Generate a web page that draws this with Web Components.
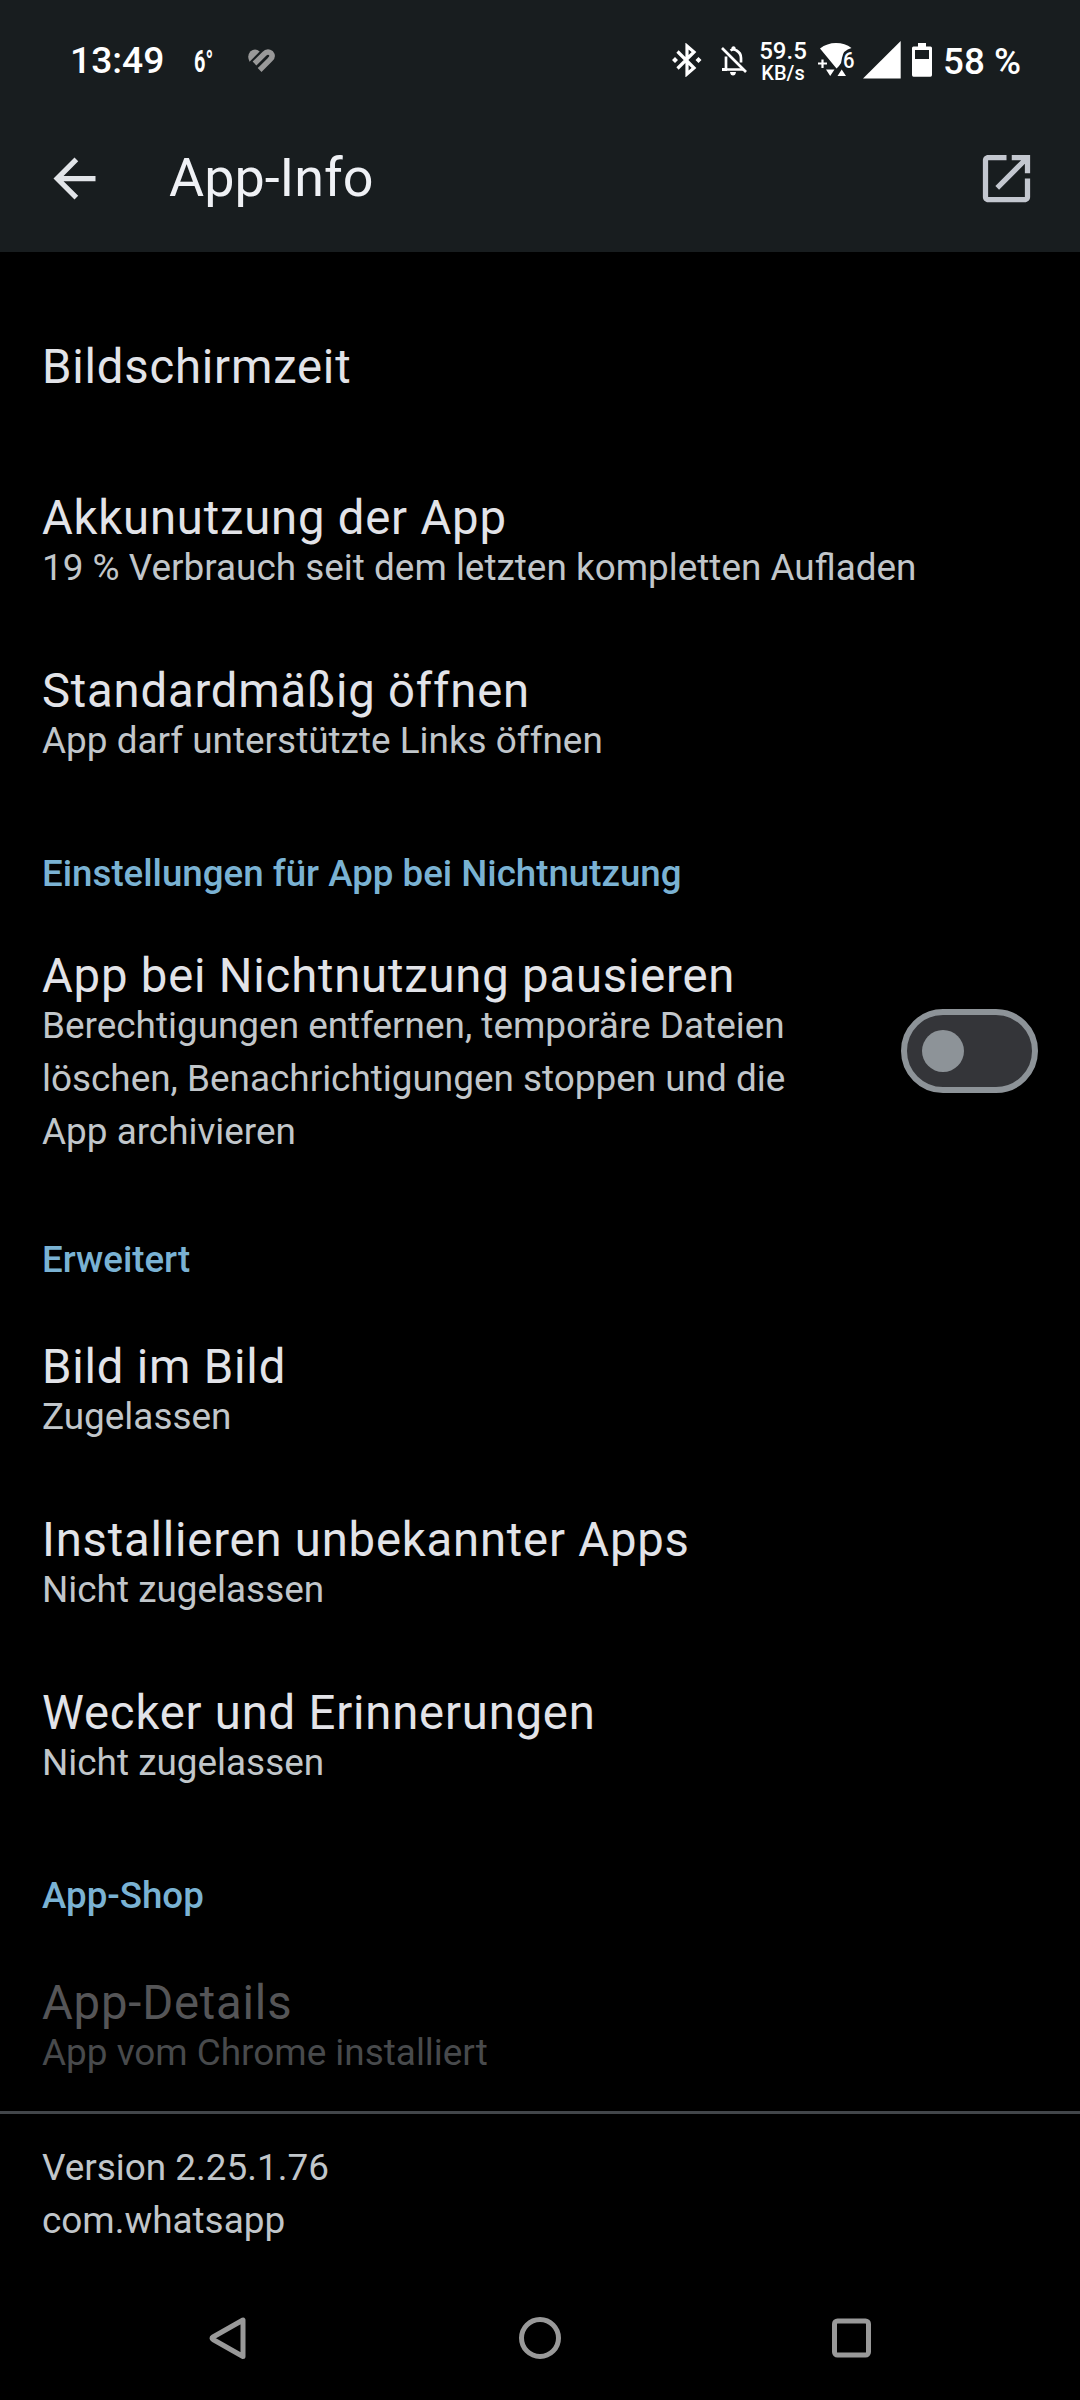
<!DOCTYPE html>
<html lang="de">
<head>
<meta charset="utf-8">
<title>App-Info</title>
<style>
html, body{
    margin: 0;
    background: #000;
}

body{
    width: 1080px;
    height: 2400px;
    overflow: hidden;
    font-family: Roboto, "Noto Sans", sans-serif;
}
</style>
</head>
<body>
<app-screen>
    <status-bar slot="top" data-time="13:49" data-temp="6°" data-speed="59.5" data-unit="KB/s" data-battery="58 %"></status-bar>
    <app-toolbar slot="top">App-Info</app-toolbar>

    <pref-item single>Bildschirmzeit</pref-item>
    <pref-item>Akkunutzung der App<span slot="summary">19 % Verbrauch seit dem letzten kompletten Aufladen</span></pref-item>
    <pref-item>Standardmäßig öffnen<span slot="summary">App darf unterstützte Links öffnen</span></pref-item>

    <pref-category>Einstellungen für App bei Nichtnutzung</pref-category>
    <pref-item compact>App bei Nichtnutzung pausieren<span slot="summary">Berechtigungen entfernen, temporäre Dateien löschen, Benachrichtigungen stoppen und die App archivieren</span><toggle-switch slot="widget"></toggle-switch></pref-item>

    <pref-category>Erweitert</pref-category>
    <pref-item>Bild im Bild<span slot="summary">Zugelassen</span></pref-item>
    <pref-item>Installieren unbekannter Apps<span slot="summary">Nicht zugelassen</span></pref-item>
    <pref-item>Wecker und Erinnerungen<span slot="summary">Nicht zugelassen</span></pref-item>

    <pref-category>App-Shop</pref-category>
    <pref-item disabled last>App-Details<span slot="summary">App vom Chrome installiert</span></pref-item>

    <version-footer>Version 2.25.1.76<br>com.whatsapp</version-footer>
    <nav-bar slot="bottom"></nav-bar>
</app-screen>

<script>
// attach an open shadow root with the given markup
function setup(el, html){
    el.attachShadow({mode: "open"});
    const template = document.createElement("template");
    template.innerHTML = html;
    el.shadowRoot.appendChild(template.content.cloneNode(true));
}

class AppScreen extends HTMLElement{
    constructor(){
        super();
        setup(this, `
<style>
:host{
    display: flex;
    flex-direction: column;
    height: 2400px;
    background: #000;
}

header{
    background: #181d1f;
    height: 252px;
}

main{
    flex: 1;
    padding-top: 23px;
}
</style>
<header><slot name="top"></slot></header>
<main><slot></slot></main>
<slot name="bottom"></slot>
`);
    }
}
customElements.define('app-screen', AppScreen);

class StatusBar extends HTMLElement{
    constructor(){
        super();
        setup(this, `
<style>
:host{
    display: flex;
    align-items: flex-start;
    height: 104px;
    padding: 0 59px 0 70px;
    box-sizing: border-box;
    color: #fff;
    font-weight: 500;
    white-space: nowrap;
}

svg{
    display: block;
    flex: none;
}

#time, #battery{
    font-size: 36.75px;
    line-height: 44px;
}

#time{
    width: 94px;
    margin-top: 38px;
    font-size: 37.2px;
}

#temp{
    width: 20px;
    margin: 42px 0 0 30px;
    font-size: 32px;
    line-height: 38px;
    font-weight: 700;
    transform: scaleX(.62);
    transform-origin: left;
}

#heart{
    margin: 49px 0 0 34px;
}

#icons{
    display: flex;
    margin-left: auto;
}

#net{
    width: 50px;
    text-align: center;
    margin: 40px 0 0 11px;
}

#speed{
    font-size: 24px;
    line-height: 23px;
}

#unit{
    font-size: 20px;
    line-height: 20px;
}

#battery{
    width: 78px;
    margin: 40px 0 0 11px;
}
</style>
<span id="time"></span>
<span id="temp"></span>
<svg id="heart" width="27" height="24" viewBox="0 0 27 24">
    <path d="M6.500 14.500L16 5.200Q19.500 1.400 23 4.200Q25.500 7.200 22.300 10.300L11.600 21" fill="none" stroke="#999" stroke-width="5.400"/>
    <path d="M9.800 17.600L19.400 8.200" stroke="#181d1f" stroke-width="1.500"/>
    <path d="M1.600 12.700Q-1.500 7 2.300 2.600Q7-1.600 11.700 2.500Z" fill="#999"/>
</svg>
<div id="icons">
    <svg width="30" height="34" viewBox="0 0 30 34" style="margin-top:43px">
        <path d="M5.500 8.500L22 25L15 31V3L22 9L5.500 25.500" fill="none" stroke="#fff" stroke-width="3.200"/>
        <path d="M3 14L6 17L3 20L0 17ZM26.500 14L29.500 17L26.500 20L23.500 17Z" fill="#fff"/>
    </svg>
    <svg width="26" height="30" viewBox="0 0 26 30" style="margin:46px 0 0 19px">
        <path d="M9.500 4.500Q12.500 2.500 15.500 4.500Q20 7 20 12V16.500M5 10.500V23.500H22" fill="none" stroke="#fff" stroke-width="2.700"/>
        <path d="M10.500 3V1.500Q12.500-1 14.500 1.500V4H10.500ZM1 22H6V25H1ZM9 26H15Q14.500 29.500 12 29.500Q9.500 29.500 9 26Z" fill="#fff"/>
        <path d="M1 2L25 26" stroke="#fff" stroke-width="2.600"/>
    </svg>
    <div id="net"><div id="speed"></div><div id="unit"></div></div>
    <svg width="38" height="34" viewBox="0 0 38 34" style="margin:43px 0 0 10px">
        <path d="M2 5.500Q9 0 18 0Q27 0 33.500 5Q25 7 24 15Q23.800 20 21 23L18.500 25.500Z" fill="#fff"/>
        <path d="M0 20.500H9M4.500 16.500V25" stroke="#fff" stroke-width="2.200"/>
        <path d="M8 26.500H16.500L12.200 33ZM19.500 33H28L23.700 26.500Z" fill="#fff"/>
        <text x="25" y="25" font-size="22" font-weight="500" fill="#fff" textLength="11.500" lengthAdjust="spacingAndGlyphs">6</text>
    </svg>
    <svg width="38" height="38" viewBox="0 0 38 38" style="margin:41px 0 0 7px">
        <path d="M0 37.500L37.700 0V37.500Z" fill="#fff"/>
    </svg>
    <svg width="20" height="34" viewBox="0 0 20 34" style="margin:43px 0 0 11px">
        <path fill-rule="evenodd" d="M6 0H14V3.500H18.500Q20 3.500 20 5V32Q20 33.700 18.500 33.700H1.500Q0 33.700 0 32V5Q0 3.500 1.500 3.500H6ZM3 7V16H17V7Z" fill="#fff"/>
    </svg>
    <span id="battery"></span>
</div>
`);
    }

    connectedCallback(){
        for(const name of ["time", "temp", "speed", "unit", "battery"]){
            this.shadowRoot.querySelector("#" + name).textContent = this.getAttribute("data-" + name);
        }
    }
}
customElements.define('status-bar', StatusBar);

class AppToolbar extends HTMLElement{
    constructor(){
        super();
        setup(this, `
<style>
:host{
    display: flex;
    align-items: center;
    height: 148px;
    padding: 0 42px 0 43px;
    box-sizing: border-box;
    color: #eff1f5;
}

svg{
    flex: none;
}

h1{
    flex: 1;
    margin: 0 0 0 63px;
    font-size: 53.9px;
    font-weight: 400;
    line-height: 64px;
}
</style>
<svg width="63" height="63" viewBox="0 0 24 24"><path fill="#e1e4e8" d="M20 11H7.830l5.590-5.590L12 4l-8 8 8 8 1.410-1.410L7.830 13H20v-2z"/></svg>
<h1><slot></slot></h1>
<svg width="63" height="63" viewBox="0 0 24 24"><path fill="#c3c7cf" d="M19 19H5V5h7V3H5c-1.110 0-2 .9-2 2v14c0 1.100.89 2 2 2h14c1.100 0 2-.9 2-2v-7h-2v7zM14 3v2h3.590l-9.830 9.830 1.410 1.410L19 6.410V10h2V3h-7z"/></svg>
`);
    }
}
customElements.define('app-toolbar', AppToolbar);

class PrefItem extends HTMLElement{
    constructor(){
        super();
        setup(this, `
<style>
:host{
    display: flex;
    align-items: center;
    justify-content: space-between;
    padding: 37px 42px 37px;
}

:host([single]){
    padding: 69px 42px 67px;
}

:host([compact]){
    padding: 32px 42px 32px;
}

:host([last]){
    padding-bottom: 32px;
}

#title{
    color: #e2e3e8;
    font-size: 47.25px;
    line-height: 47px;
    letter-spacing: .8px;
    white-space: nowrap;
}

#summary{
    margin-top: -1px;
    color: #c1c6ca;
    font-size: 36.9px;
    line-height: 53px;
}

:host([single]) #summary{
    margin-top: 0;
}

:host([compact]) #summary{
    width: 770px;
}

:host([disabled]) #title{
    color: #555557;
}

:host([disabled]) #summary{
    color: #484a4c;
}
</style>
<div>
    <div id="title"><slot></slot></div>
    <div id="summary"><slot name="summary"></slot></div>
</div>
<slot name="widget"></slot>
`);
    }
}
customElements.define('pref-item', PrefItem);

class PrefCategory extends HTMLElement{
    constructor(){
        super();
        setup(this, `
<style>
:host{
    display: block;
    padding: 43px 42px 21px;
    color: #7ab2d3;
    font-size: 36.7px;
    font-weight: 500;
    line-height: 53px;
}
</style>
<slot></slot>
`);
    }
}
customElements.define('pref-category', PrefCategory);

class ToggleSwitch extends HTMLElement{
    constructor(){
        super();
        setup(this, `
<style>
:host{
    display: flex;
    align-items: center;
    flex: none;
    width: 137px;
    height: 84px;
    margin-bottom: 9px;
    padding-left: 15px;
    box-sizing: border-box;
    border: 6px solid #8d9398;
    border-radius: 42px;
    background: #343539;
}

#thumb{
    width: 42px;
    height: 42px;
    border-radius: 50%;
    background: #8d9398;
}
</style>
<div id="thumb"></div>
`);
    }
}
customElements.define('toggle-switch', ToggleSwitch);

class VersionFooter extends HTMLElement{
    constructor(){
        super();
        setup(this, `
<style>
:host{
    display: block;
    padding: 27px 42px 0;
    border-top: 3px solid #42464a;
    color: #c1c6ca;
    font-size: 36.9px;
    line-height: 53px;
}
</style>
<slot></slot>
`);
    }
}
customElements.define('version-footer', VersionFooter);

class NavBar extends HTMLElement{
    constructor(){
        super();
        setup(this, `
<style>
:host{
    display: flex;
    align-items: center;
    justify-content: space-between;
    height: 125px;
    padding: 0 208px 0 207px;
}
</style>
<svg width="44" height="44" viewBox="0 0 44 44"><path d="M36 4V40.500L6 23.500Q4 22.200 6 21Z" fill="none" stroke="#999" stroke-width="5" stroke-linejoin="round"/></svg>
<svg width="44" height="44" viewBox="0 0 44 44"><circle cx="22" cy="22" r="18.500" fill="none" stroke="#999" stroke-width="5"/></svg>
<svg width="44" height="44" viewBox="0 0 44 44"><rect x="6.500" y="5" width="34" height="34" rx="3" fill="none" stroke="#999" stroke-width="5"/></svg>
`);
    }
}
customElements.define('nav-bar', NavBar);
</script>
</body>
</html>
